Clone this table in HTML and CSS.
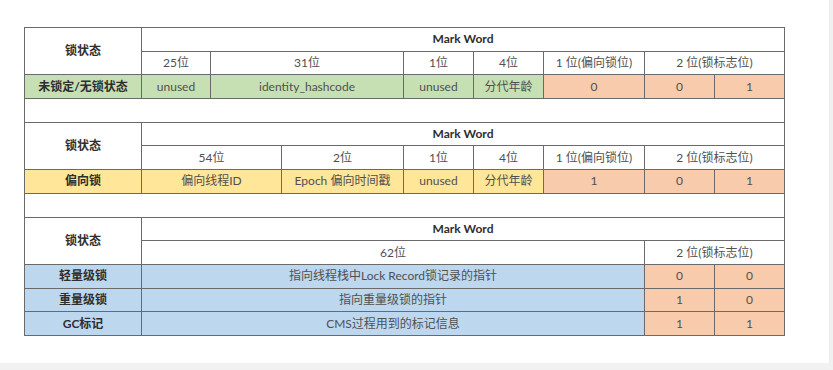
FILE: index.html
```html
<!DOCTYPE html>
<html lang="zh">
<head>
<meta charset="utf-8">
<link rel="stylesheet" href="styles.css">
</head>
<body>
<div class="card">
<table class="mw">
<colgroup>
<col class="c0"><col class="c1"><col class="c2"><col class="c3"><col class="c4"><col class="c5"><col class="c6"><col class="c7"><col class="c8">
</colgroup>
<tbody>
<tr><th rowspan="2" class="hd">锁状态</th><th colspan="8" class="hd">Mark Word</th></tr>
<tr><td>25位</td><td colspan="2">31位</td><td>1位</td><td>4位</td><td>1 位(偏向锁位)</td><td colspan="2">2 位(锁标志位)</td></tr>
<tr class="green"><th class="hd">未锁定/无锁状态</th><td>unused</td><td colspan="2">identity_hashcode</td><td>unused</td><td>分代年龄</td><td class="o">0</td><td class="o">0</td><td class="o">1</td></tr>
<tr><td colspan="9"></td></tr>
<tr><th rowspan="2" class="hd">锁状态</th><th colspan="8" class="hd">Mark Word</th></tr>
<tr><td colspan="2">54位</td><td>2位</td><td>1位</td><td>4位</td><td>1 位(偏向锁位)</td><td colspan="2">2 位(锁标志位)</td></tr>
<tr class="yellow"><th class="hd">偏向锁</th><td colspan="2">偏向线程ID</td><td>Epoch 偏向时间戳</td><td>unused</td><td>分代年龄</td><td class="o">1</td><td class="o">0</td><td class="o">1</td></tr>
<tr><td colspan="9"></td></tr>
<tr><th rowspan="2" class="hd">锁状态</th><th colspan="8" class="hd">Mark Word</th></tr>
<tr><td colspan="6">62位</td><td colspan="2">2 位(锁标志位)</td></tr>
<tr class="blue"><th class="hd">轻量级锁</th><td colspan="6">指向线程栈中Lock Record锁记录的指针</td><td class="o">0</td><td class="o">0</td></tr>
<tr class="blue"><th class="hd">重量级锁</th><td colspan="6">指向重量级锁的指针</td><td class="o">1</td><td class="o">0</td></tr>
<tr class="blue"><th class="hd">GC标记</th><td colspan="6">CMS过程用到的标记信息</td><td class="o">1</td><td class="o">1</td></tr>
</tbody>
</table>
</div>
</body>
</html>
```
FILE: styles.css
```css
html, body {
  margin: 0;
  padding: 0;
  background: #f1f1f2;
}
.card {
  width: 829px;
  height: 363px;
  background: #ffffff;
  padding: 27px 0 0 24px;
  box-sizing: border-box;
  box-shadow: 0 0 2px rgba(0,0,0,0.06);
}
.mw {
  border-collapse: collapse;
  table-layout: fixed;
  width: 761px;
  font-family: Lato, "Noto Sans CJK SC", sans-serif;
  font-size: 12px;
  color: #505050;
}
.c0 { width: 117px; }
.c1 { width: 69px; }
.c2 { width: 71px; }
.c3 { width: 122px; }
.c4 { width: 70px; }
.c5 { width: 70px; }
.c6 { width: 101px; }
.c7 { width: 70px; }
.c8 { width: 70px; }
.mw tr { height: 23.7px; }
.mw td, .mw th {
  border: 1px solid #6a6a6a;
  text-align: center;
  padding: 0;
  line-height: 16px;
  white-space: nowrap;
}
.mw .hd {
  font-weight: bold;
  color: #2e2e2e;
}
.green td, .green th { background: #c6e0b4; }
.yellow td, .yellow th { background: #ffe699; }
.blue td, .blue th { background: #bdd7ee; }
.mw td.o { background: #f8cbad; }
```
